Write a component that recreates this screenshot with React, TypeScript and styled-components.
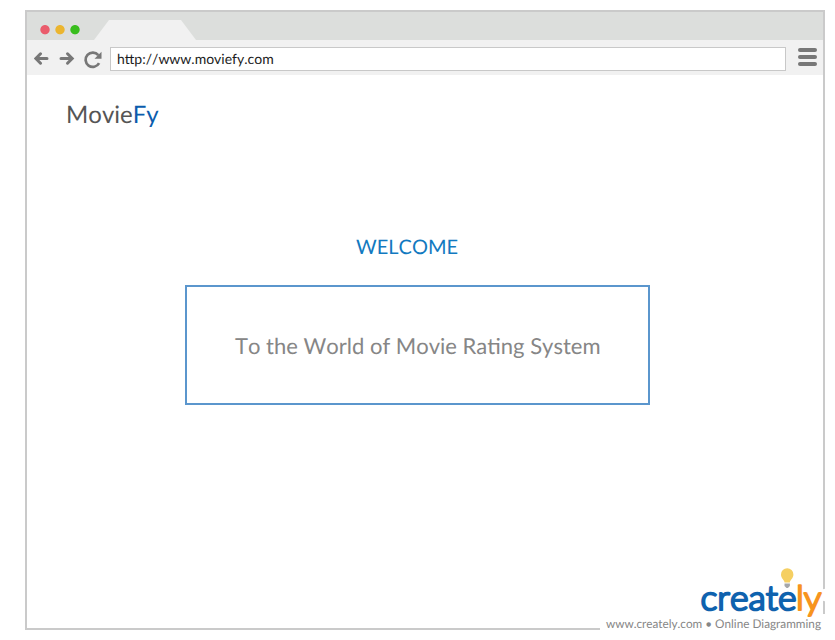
import React from "react";
import styled, { createGlobalStyle } from "styled-components";

const GlobalStyle = createGlobalStyle`
  * { box-sizing: border-box; }
  body {
    margin: 0;
    background: #fff;
    font-family: Lato, Carlito, sans-serif;
    font-kerning: none;
    font-variant-ligatures: common-ligatures;
    text-rendering: geometricPrecision;
  }
`;

const Page = styled.div`
  position: relative;
  width: 835px;
  height: 640px;
  padding: 10px 10px 10px 25px;
  overflow: hidden;
`;

const BrowserWindow = styled.div`
  display: flex;
  flex-direction: column;
  width: 800px;
  height: 620px;
  border: 2px solid #cacaca;
  background: #fff;
`;

const TabStrip = styled.div`
  display: flex;
  align-items: flex-end;
  height: 28px;
  padding-left: 13px;
  background: #dcdedc;
`;

const WindowButtons = styled.div`
  display: flex;
  gap: 5px;
  width: 54px;
  padding-bottom: 5px;
`;

const Dot = styled.span<{ $color: string }>`
  width: 10px;
  height: 10px;
  background: radial-gradient(circle at 5px 4.7px, ${(p) => p.$color} 4.2px, transparent 5.1px);
`;

const Tab = styled.div`
  width: 102px;
  height: 20px;
  background: #f1f1f1;
  clip-path: polygon(0 100%, 15px 0, 87px 0, 100% 100%);
`;

const Toolbar = styled.div`
  display: flex;
  align-items: flex-start;
  height: 35px;
  padding: 7px 6px 0 7px;
  background: #f1f1f1;
`;

const NavIcons = styled.svg`
  display: block;
  width: 70px;
  height: 24px;
  margin-right: 6px;
`;

const AddressBar = styled.div`
  width: 676px;
  height: 24px;
  padding-left: 6px;
  border: 1px solid #c8c8c8;
  background: #fff;
  color: #1c1c1c;
  font-size: 14px;
  line-height: 22px;
`;

const MenuButton = styled.div`
  display: flex;
  flex-direction: column;
  gap: 3px;
  margin: 1px 0 0 12px;
`;

const MenuBar = styled.span`
  width: 19px;
  height: 4px;
  border-radius: 2px;
  background: #777;
`;

const Content = styled.main`
  display: flex;
  flex-direction: column;
  padding: 22px 39px 0;
`;

const Brand = styled.div`
  height: 35px;
  color: #555;
  font-size: 24px;
  line-height: 35px;
  white-space: nowrap;
`;

const BrandAccent = styled.span`
  color: #0b5cad;
`;

const Welcome = styled.h1`
  margin: 100px 0 0 290px;
  color: #1279c0;
  font-size: 20px;
  font-weight: 400;
  line-height: 30px;
`;

const Message = styled.div`
  display: flex;
  width: 465px;
  height: 120px;
  margin: 23px 0 0 119px;
  padding-left: 48px;
  align-items: center;
  border: 2px solid #5b96cd;
  color: #868686;
  font-size: 22px;
  white-space: nowrap;
`;

const Credit = styled.div`
  position: absolute;
  left: 600px;
  top: 565px;
  width: 235px;
  height: 75px;
`;

const CreditArt = styled.svg`
  display: block;
`;

export default function App() {
  return (
    <Page>
      <GlobalStyle />
      <BrowserWindow>
        <TabStrip>
          <WindowButtons>
            <Dot $color="#ea5c6c" />
            <Dot $color="#ebb52f" />
            <Dot $color="#38bd1c" />
          </WindowButtons>
          <Tab />
        </TabStrip>
        <Toolbar>
          <NavIcons viewBox="34 47 70 24" fill="none" stroke="#777" strokeWidth="3">
            <path strokeLinecap="round" d="M40.500 53.800L35.800 58.500l4.700 4.700M36.500 58.500H47" />
            <path strokeLinecap="round" d="M67.500 53.800l4.700 4.700-4.700 4.700M71.500 58.500H61" />
            <path d="M98.300 55.100A7.200 7.200 0 1 0 99.100 63.200" strokeWidth="2.700" />
            <path d="M101.500 51.800v7h-7z" fill="#777" stroke="none" />
          </NavIcons>
          <AddressBar>http://www.moviefy.com</AddressBar>
          <MenuButton>
            <MenuBar />
            <MenuBar />
            <MenuBar />
          </MenuButton>
        </Toolbar>
        <Content>
          <Brand>
            Movie<BrandAccent>Fy</BrandAccent>
          </Brand>
          <Welcome>WELCOME</Welcome>
          <Message>To the World of Movie Rating System</Message>
        </Content>
      </BrowserWindow>
      <Credit>
        <CreditArt width="235" height="75" viewBox="600 565 235 75">
          <path d="M600 614H835V640H600zM820 590l6-1.500v13l-6-1.500z" fill="#fff" />
          <path d="M784.500 582.500c0-2.500-3.500-4-3.500-8a6.200 6.200 0 0 1 12.400 0c0 4-3.500 5.500-3.500 8z" fill="#f5cf62" />
          <path d="M784.500 583.500h5.400v2.500l-2 2h-1.400l-2-2z" fill="#a5a7aa" />
          <g fontFamily="Lato" fontSize="34" fontWeight="300" strokeLinejoin="round" strokeLinecap="round" strokeWidth="2.200">
            <text x="700.500" y="609.500" textLength="96" lengthAdjust="spacingAndGlyphs" fill="#0f62ae" stroke="#0f62ae">create</text>
            <text x="796" y="609.500" textLength="25.500" lengthAdjust="spacingAndGlyphs" fill="#f7941e" stroke="#f7941e">ly</text>
          </g>
          <text x="606" y="628" fontFamily="Lato" fontSize="12" fill="#868686" textLength="215" lengthAdjust="spacingAndGlyphs">
            www.creately.com • Online Diagramming
          </text>
        </CreditArt>
      </Credit>
    </Page>
  );
}
